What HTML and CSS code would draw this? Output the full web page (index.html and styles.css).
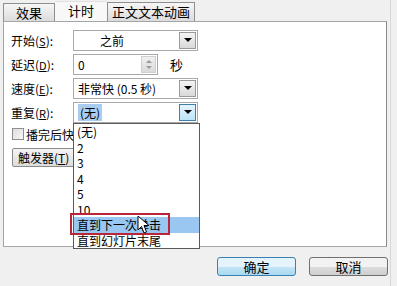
FILE: index.html
```html
<!DOCTYPE html>
<html lang="zh-CN">
<head>
    <meta charset="UTF-8">
    <title>计时</title>
    <link rel="stylesheet" href="styles.css">
</head>
<body>
    <div class="dialog">
        <div class="tabs">
            <div class="tab tab-effect">效果</div>
            <div class="tab tab-active">计时</div>
            <div class="tab tab-text">正文文本动画</div>
        </div>
        <div class="panel">
            <div class="row">
                <span class="label">开始(<u>S</u>):</span>
                <div class="select">
                    <span class="value value-center">之前</span>
                    <span class="drop"><i class="tri"></i></span>
                </div>
            </div>
            <div class="row">
                <span class="label">延迟(<u>D</u>):</span>
                <div class="spin">
                    <span class="value">0</span>
                    <span class="spin-btn"><i class="up"></i><i class="down"></i></span>
                </div>
                <span class="unit">秒</span>
            </div>
            <div class="row">
                <span class="label">速度(<u>E</u>):</span>
                <div class="select">
                    <span class="value">非常快 (0.5 秒)</span>
                    <span class="drop"><i class="tri"></i></span>
                </div>
            </div>
            <div class="row">
                <span class="label">重复(<u>R</u>):</span>
                <div class="select select-open">
                    <span class="value"><span class="picked">(无)</span></span>
                    <span class="drop drop-hot"><i class="tri"></i></span>
                </div>
            </div>
            <div class="row row-check">
                <span class="check"></span>
                <span class="check-text">播完后快</span>
            </div>
            <div class="row row-trigger">
                <span class="trigger">触发器(<u>T</u>)</span>
            </div>

            <ul class="list">
                <li>(无)</li>
                <li>2</li>
                <li>3</li>
                <li>4</li>
                <li>5</li>
                <li>10</li>
                <li class="hot">直到下一次单击<span class="mark"></span>
                    <svg class="cursor" width="13" height="20" viewBox="0 0 13 20">
                        <path d="M1 1 L1 15 L4.5 11.5 L7 18 L9.5 17 L7 10.5 L12 10.5 Z" fill="#fff" stroke="#000" stroke-width="1"/>
                    </svg>
                </li>
                <li>直到幻灯片末尾</li>
            </ul>
        </div>
        <div class="actions">
            <button class="btn btn-default">确定</button>
            <button class="btn">取消</button>
        </div>
    </div>
</body>
</html>
```

FILE: styles.css
```css
body {
    margin: 0;
    width: 397px;
    height: 286px;
    overflow: hidden;
    background: #f0f0f0;
    font-family: "Noto Sans CJK SC", "DejaVu Sans", sans-serif;
    font-size: 12px;
    color: #000;
}
u {
    text-decoration: underline;
}
.dialog {
    width: 390px;
    height: 286px;
    border-right: 1px solid #d8d8d8;
}
.tabs {
    display: flex;
    align-items: flex-end;
    height: 21px;
    padding-left: 3px;
}
.tab {
    box-sizing: border-box;
    font-size: 13px;
    line-height: 16px;
    text-align: center;
}
.tab-effect {
    width: 52px;
    height: 18px;
    border: 1px solid #8e8f8f;
    border-bottom: none;
    background: linear-gradient(#f6f6f6, #dcdcdc);
    padding-top: 1px;
}
.tab-active {
    width: 52px;
    height: 21px;
    padding-top: 1px;
    background: #f8f8f8;
    border-top: 1px solid #e0e0e0;
    margin-bottom: -1px;
    position: relative;
}
.tab-text {
    width: 88px;
    height: 19px;
    border: 1px solid #8e8f8f;
    border-bottom: none;
    background: linear-gradient(#f6f6f6, #dcdcdc);
    padding-top: 1px;
}
.panel {
    position: relative;
    box-sizing: border-box;
    margin-left: 3px;
    width: 384px;
    height: 226px;
    background: #fff;
    border: 1px solid #a5a5a5;
    border-right-color: #8a8a8a;
    padding: 8px 0 0 7px;
    display: flex;
    flex-direction: column;
    gap: 4px;
}
.row {
    display: flex;
    align-items: center;
    height: 20px;
}
.label {
    width: 62px;
    font-size: 12px;
    white-space: nowrap;
}
.label u {
    font-size: 11px;
}
.select, .spin {
    box-sizing: border-box;
    position: relative;
    display: flex;
    align-items: center;
    height: 21px;
    border: 1px solid #a9a9a9;
    background: #fff;
}
.select {
    width: 125px;
}
.spin {
    width: 85px;
}
.value {
    flex: 1;
    padding-left: 4px;
    line-height: 19px;
    white-space: nowrap;
}
.value-center {
    padding-left: 26px;
}
.picked {
    background: #a9cdf0;
    padding: 0 2px;
}
.drop {
    box-sizing: border-box;
    width: 17px;
    height: 17px;
    margin-right: 1px;
    border: 1px solid #9a9a9a;
    background: linear-gradient(#f4f4f4, #d9d9d9);
    display: flex;
    align-items: center;
    justify-content: center;
}
.drop-hot {
    border-color: #3c7fb1;
    background: linear-gradient(#e6f4fc, #bde4f8);
}
.tri {
    width: 0;
    height: 0;
    border-left: 4px solid transparent;
    border-right: 4px solid transparent;
    border-top: 4px solid #000;
}
.spin-btn {
    box-sizing: border-box;
    width: 15px;
    height: 17px;
    margin-right: 1px;
    display: flex;
    flex-direction: column;
    align-items: center;
    justify-content: center;
    gap: 3px;
    background: linear-gradient(#f0f0f0, #dadada);
    border: 1px solid #cfcfcf;
}
.up, .down {
    width: 0;
    height: 0;
    border-left: 3px solid transparent;
    border-right: 3px solid transparent;
}
.up {
    border-bottom: 3px solid #9a9a9a;
}
.down {
    border-top: 3px solid #9a9a9a;
}
.unit {
    margin-left: 12px;
    font-size: 13px;
}
.row-check {
    height: 16px;
}
.check {
    box-sizing: border-box;
    width: 12px;
    height: 12px;
    border: 1px solid #8e8f8f;
    background: linear-gradient(135deg, #dcdcdc, #f8f8f8);
    margin-left: 1px;
    margin-right: 2px;
}
.check-text {
    font-size: 12px;
    white-space: nowrap;
}
.row-trigger {
    margin-top: 2px;
    height: 19px;
}
.trigger {
    box-sizing: border-box;
    height: 19px;
    padding: 0 5px;
    border: 1px solid #8a8a8a;
    border-radius: 2px;
    background: linear-gradient(#f4f4f4, #dcdcdc);
    line-height: 17px;
    white-space: nowrap;
    margin-left: 1px;
}
.list {
    position: absolute;
    left: 69px;
    top: 101px;
    width: 127px;
    margin: 0;
    padding: 0;
    list-style: none;
    box-sizing: border-box;
    background: #fff;
    border: 1px solid #5a5a5a;
    z-index: 2;
}
.list li {
    position: relative;
    height: 15.5px;
    line-height: 15.5px;
    padding-left: 3px;
    font-size: 12px;
    white-space: nowrap;
}
.list li.hot {
    background: #99c7f2;
}
.mark {
    position: absolute;
    left: -4px;
    top: -4px;
    width: 100px;
    height: 22px;
    box-sizing: border-box;
    border: 2px solid #b9263a;
}
.cursor {
    position: absolute;
    left: 63px;
    top: -2px;
}
.actions {
    display: flex;
    justify-content: flex-end;
    gap: 13px;
    padding: 10px 2px 0 0;
}
.btn {
    box-sizing: border-box;
    width: 79px;
    height: 19px;
    padding: 0;
    font-family: inherit;
    font-size: 13px;
    line-height: 17px;
    border: 1px solid #707070;
    border-radius: 3px;
    background: linear-gradient(#f2f2f2 50%, #dddddd 50%, #cfcfcf);
    color: #000;
}
.btn-default {
    border-color: #3c7fb1;
    background: linear-gradient(#e5f4fc 50%, #c4e5f6 50%, #a9daf2);
}
```
